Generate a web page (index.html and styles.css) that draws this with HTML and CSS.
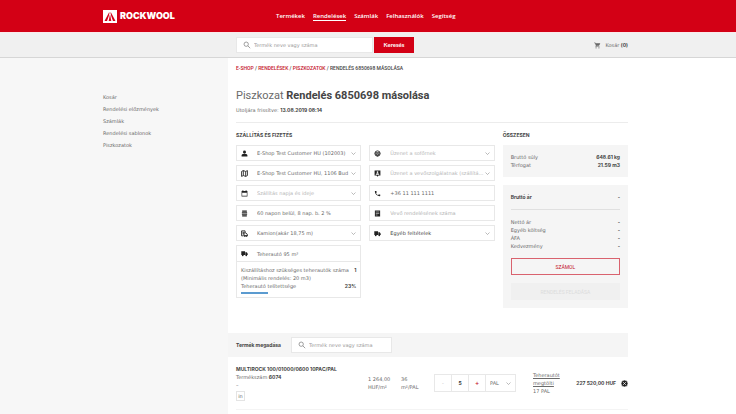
FILE: index.html
```html
<!DOCTYPE html>
<html lang="hu">
<head>
    <meta charset="UTF-8">
    <meta name="viewport" content="width=device-width, initial-scale=1.0">
    <title>Rockwool - Rendelés másolása</title>
    <link rel="stylesheet" href="styles.css">
</head>
<body>
    <header class="top">
        <a href="#" class="logo">
            <svg class="logo-mark" viewBox="0 0 14 13"><rect width="14" height="13" fill="#fff"/><path d="M1.500 11 6 2.500h.6L5.800 6 4 11zM12.500 11 8 2.500h-.6L8.200 6 10 11zM6.800 5h.4L8.300 11H5.700z" fill="#d3001b"/></svg>
            ROCKWOOL
        </a>
        <nav class="main-nav">
            <a href="#">Termékek</a>
            <a href="#" class="active">Rendelések</a>
            <a href="#">Számlák</a>
            <a href="#">Felhasználók</a>
            <a href="#">Segítség</a>
        </nav>
    </header>

    <div class="toolbar">
        <form class="toolbar-search">
            <div class="search-box">
                <svg viewBox="0 0 10 10"><circle cx="4" cy="4" r="2.700"/><path d="M6 6l3 3"/></svg>
                <input type="text" aria-label="Keresés" placeholder="Termék neve vagy száma">
            </div>
            <button type="button" class="btn-search">Keresés</button>
        </form>
        <a href="#" class="cart">
            <svg viewBox="0 0 24 24"><path d="M7 18a2 2 0 1 0 0 4 2 2 0 0 0 0-4zM17 18a2 2 0 1 0 0 4 2 2 0 0 0 0-4zM1 2v2h2l3.600 7.600L5.200 14C4.500 15.400 5.500 17 7 17h12v-2H7.400l1.100-2h7.500c.7 0 1.400-.4 1.700-1L21.500 5 20.500 4H5.200l-.9-2z"/></svg>
            <span>Kosár <b>(0)</b></span>
        </a>
    </div>

    <div class="layout">
        <aside class="sidebar">
            <a href="#">Kosár</a>
            <a href="#">Rendelési előzmények</a>
            <a href="#">Számlák</a>
            <a href="#">Rendelési sablonok</a>
            <a href="#">Piszkozatok</a>
        </aside>

        <main class="content">
            <nav class="breadcrumb">
                <a href="#">E-shop</a> / <a href="#">Rendelések</a> / <a href="#">Piszkozatok</a> / <span>Rendelés 6850698 másolása</span>
            </nav>
            <h1>Piszkozat <b>Rendelés 6850698 másolása</b></h1>
            <p class="updated">Utoljára frissítve: <b>13.08.2019 08:14</b></p>

            <div class="order">
                <section class="shipping">
                    <h2>Szállítás és fizetés</h2>
                    <div class="columns">
                        <div class="fields">
                            <div class="field">
                                <svg class="icon" viewBox="0 0 24 24"><path d="M12 2a5 5 0 0 1 5 5c0 3-2 6-5 6s-5-3-5-6a5 5 0 0 1 5-5zM2 22v-4c0-2 4-4 7-4h6c3 0 7 2 7 4v4z"/></svg>
                                <select aria-label="Vevő"><option>E-Shop Test Customer HU (102003)</option></select>
                                <svg class="chevron" viewBox="0 0 10 10"><path d="M1 3l4 4 4-4"/></svg>
                            </div>
                            <div class="field">
                                <svg class="icon line" viewBox="0 0 24 24"><path d="M2 5l6-3 8 3 6-3v17l-6 3-8-3-6 3zM8 2v17M16 5v17"/></svg>
                                <select aria-label="Cím"><option>E-Shop Test Customer HU, 1106 Bud</option></select>
                                <svg class="chevron" viewBox="0 0 10 10"><path d="M1 3l4 4 4-4"/></svg>
                            </div>
                            <div class="field">
                                <svg class="icon" viewBox="0 0 24 24"><path d="M5 1h3v2h8V1h3v2h3v19H2V3h3zM4 9v11h16V9z" fill-rule="evenodd"/></svg>
                                <select class="empty" aria-label="Szállítás napja"><option>Szállítás napja és ideje</option></select>
                                <svg class="chevron" viewBox="0 0 10 10"><path d="M1 3l4 4 4-4"/></svg>
                            </div>
                            <div class="field">
                                <svg class="icon" viewBox="0 0 24 24"><path d="M4 2h16v4H4zM3 8h18v3H3zM3 13h18v3H3zM4 18h16v4H4z"/></svg>
                                <input type="text" aria-label="Fizetési feltétel" value="60 napon belül, 8 nap. b. 2 %">
                            </div>
                            <div class="field">
                                <svg class="icon line" viewBox="0 0 24 24"><path d="M8 20H2V3h12v6M5 8h6M5 13h5M10 10h7l5 5v5H10z"/><circle cx="13" cy="20" r="2"/><circle cx="19" cy="20" r="2"/></svg>
                                <select aria-label="Jármű"><option>Kamion(akár 18,75 m)</option></select>
                                <svg class="chevron" viewBox="0 0 10 10"><path d="M1 3l4 4 4-4"/></svg>
                            </div>
                            <div class="truck">
                                <div class="truck-head">
                                    <svg class="icon" viewBox="0 0 24 24"><path d="M1 4h13v13H1zM15 8h5l3 5v4h-8z"/><circle cx="6" cy="18" r="3"/><circle cx="18" cy="18" r="3"/></svg>
                                    <span>Teherautó 95 m³</span>
                                </div>
                                <dl class="truck-info">
                                    <div><dt>Kiszállításhoz szükséges teherautók száma<br>(Minimális rendelés: 20 m3)</dt><dd>1</dd></div>
                                    <div><dt>Teherautó telítettsége</dt><dd>23%</dd></div>
                                </dl>
                                <div class="bar"><div class="bar-fill" style="width: 23%"></div></div>
                            </div>
                        </div>

                        <div class="fields">
                            <div class="field">
                                <svg class="icon line" viewBox="0 0 24 24"><circle cx="12" cy="12" r="9"/><path d="M3 11c5-3 13-3 18 0M9 13h6l-1 7h-4zM4 14h5M15 14h5"/></svg>
                                <select class="empty" aria-label="Üzenet a sofőrnek"><option>Üzenet a sofőrnek</option></select>
                                <svg class="chevron" viewBox="0 0 10 10"><path d="M1 3l4 4 4-4"/></svg>
                            </div>
                            <div class="field">
                                <svg class="icon" viewBox="0 0 24 24"><path d="M2 2h20v17h-7l-3 4-3-4H2zM12 4a3 3 0 1 0 0 6 3 3 0 0 0 0-6zM6 16h12c0-3-3-5-6-5s-6 2-6 5z" fill-rule="evenodd"/></svg>
                                <select class="empty" aria-label="Üzenet a vevőszolgálatnak"><option>Üzenet a vevőszolgálatnak (szállítá...</option></select>
                                <svg class="chevron" viewBox="0 0 10 10"><path d="M1 3l4 4 4-4"/></svg>
                            </div>
                            <div class="field">
                                <svg class="icon" viewBox="0 0 24 24"><path d="M7 11c1.400 2.800 3.800 5.100 6.600 6.600l2.200-2.200c.3-.3.700-.4 1-.2 1.100.4 2.300.6 3.600.6.600 0 1 .4 1 1V20c0 .6-.4 1-1 1C11 21 3 13 3 4c0-.6.400-1 1-1h3.500c.6 0 1 .4 1 1 0 1.300.2 2.500.6 3.600.1.300 0 .7-.3 1z"/></svg>
                                <input type="text" aria-label="Telefonszám" value="+36 11 111 1111">
                            </div>
                            <div class="field">
                                <svg class="icon" viewBox="0 0 24 24"><path d="M3 2h18v20H3zM6 6v2h12V6zM6 11v2h12v-2zM6 16v2h6v-2z" fill-rule="evenodd"/></svg>
                                <input type="text" aria-label="Vevő rendelésének száma" placeholder="Vevő rendelésének száma">
                            </div>
                            <div class="field">
                                <svg class="icon" viewBox="0 0 24 24"><path d="M1 4h13v13H1zM15 8h5l3 5v4h-8z"/><circle cx="6" cy="18" r="3"/><circle cx="18" cy="18" r="3"/></svg>
                                <select class="dark" aria-label="Egyéb feltételek"><option>Egyéb feltételek</option></select>
                                <svg class="chevron" viewBox="0 0 10 10"><path d="M1 3l4 4 4-4"/></svg>
                            </div>
                        </div>
                    </div>
                </section>

                <section class="summary">
                    <h2>Összesen</h2>
                    <dl class="panel">
                        <div><dt>Bruttó súly</dt><dd>648.61 kg</dd></div>
                        <div><dt>Térfogat</dt><dd>21.59 m3</dd></div>
                    </dl>
                    <div class="panel">
                        <dl>
                            <div class="gross"><dt>Bruttó ár</dt><dd>-</dd></div>
                            <div><dt>Nettó ár</dt><dd>-</dd></div>
                            <div><dt>Egyéb költség</dt><dd>-</dd></div>
                            <div><dt>ÁFA</dt><dd>-</dd></div>
                            <div><dt>Kedvezmény</dt><dd>-</dd></div>
                        </dl>
                        <button type="button" class="btn-outline">SZÁMOL</button>
                        <button type="button" class="btn-disabled" disabled>RENDELÉS FELADÁSA</button>
                    </div>
                </section>
            </div>

            <div class="add-product">
                <label for="product">Termék megadása</label>
                <div class="search-box">
                    <svg viewBox="0 0 10 10"><circle cx="4" cy="4" r="2.700"/><path d="M6 6l3 3"/></svg>
                    <input type="text" id="product" placeholder="Termék neve vagy száma">
                </div>
            </div>

            <table class="products">
                <tr>
                    <td class="col-name">
                        <b>MULTIROCK 100/01000/0600 10PAC/PAL</b><br>
                        Termékszám <b>6074</b><br>
                        –<br>
                        <span class="tag">in</span>
                    </td>
                    <td class="col-small">1 264,00<br>HUF/m²</td>
                    <td class="col-small">36<br>m²/PAL</td>
                    <td class="col-amount">
                        <div class="amount">
                            <button type="button" class="minus">-</button>
                            <input type="text" aria-label="Mennyiség" value="5">
                            <button type="button" class="plus">+</button>
                            <div class="unit">
                                <select aria-label="Egység"><option>PAL</option></select>
                                <svg class="chevron" viewBox="0 0 10 10"><path d="M1 3l4 4 4-4"/></svg>
                            </div>
                        </div>
                    </td>
                    <td class="col-truck"><a href="#">Teherautót megtölti</a><br>17 PAL</td>
                    <td class="col-total">227 520,00 HUF</td>
                    <td class="col-remove">
                        <button type="button" class="remove" aria-label="Törlés">
                            <svg viewBox="0 0 10 10"><circle cx="5" cy="5" r="5"/><path d="M3 3l4 4M7 3l-4 4"/></svg>
                        </button>
                    </td>
                </tr>
            </table>
        </main>
    </div>
</body>
</html>
```
FILE: styles.css
```css
* {
    box-sizing: border-box;
}

body {
    margin: 0;
    min-height: 100vh;
    display: flex;
    flex-direction: column;
    background-color: #fff;
    color: #6a6a6a;
    font-family: "DejaVu Sans", sans-serif;
    font-size: 5px;
    line-height: 8px;
}

a {
    color: inherit;
    text-decoration: none;
}

h1, h2, p, dl, dd {
    margin: 0;
}

input, select, button {
    margin: 0;
    padding: 0;
    border: none;
    border-radius: 0;
    background: none;
    color: inherit;
    font: inherit;
    appearance: none;
    outline: none;
}

button {
    cursor: pointer;
}

input::placeholder {
    color: #b0b0b0;
    opacity: 1;
}

/* header */
.top {
    display: flex;
    align-items: center;
    height: 32px;
    padding-left: 103px;
    background-color: #d30015;
    color: #fff;
}

.logo {
    display: flex;
    align-items: center;
    gap: 3px;
    width: 173px;
    font-family: Inter, sans-serif;
    font-size: 9px;
    font-weight: 900;
}

.logo-mark {
    width: 14px;
    height: 13px;
}

.main-nav {
    display: flex;
    gap: 8px;
    font-family: "Open Sans", sans-serif;
    font-size: 6px;
    font-weight: 600;
}

.main-nav .active {
    border-bottom: 1px solid #fff;
    margin-bottom: -1px;
}

.toolbar {
    display: flex;
    justify-content: space-between;
    align-items: center;
    height: 26px;
    padding: 0 108px 0 236px;
    background-color: #f0f0f0;
    border-top: 1px solid #fbe9ea;
    border-bottom: 1px solid #d6d6d6;
}

.toolbar-search {
    display: flex;
    gap: 1px;
    width: 178px;
    height: 16px;
}

.search-box {
    display: flex;
    align-items: center;
    gap: 3px;
    flex: 1;
    padding-left: 6px;
    height: 16px;
    background-color: #fff;
    border: 1px solid #e8e8e8;
}

.search-box svg {
    width: 8px;
    height: 8px;
    fill: none;
    stroke: #888;
}

.search-box input {
    flex: 1;
    min-width: 0;
}

.search-box input::placeholder {
    color: #999;
}

.btn-search {
    width: 40px;
    background-color: #d30015;
    color: #fff;
    font-family: Lato, sans-serif;
    font-size: 6px;
    font-weight: bold;
}

.cart {
    display: flex;
    align-items: center;
    gap: 4px;
}

.cart svg {
    width: 7px;
    height: 7px;
    fill: #666;
}

/* page */
.layout {
    display: flex;
    flex: 1;
}

.sidebar {
    display: flex;
    flex-direction: column;
    gap: 4px;
    width: 228px;
    padding: 35px 0 0 103px;
    background-color: #f7f7f7;
}

.content {
    flex: 1;
    min-width: 0;
    margin-right: 108px;
}

.breadcrumb {
    padding: 6px 0 0 8px;
    color: #444;
    font-family: Roboto, sans-serif;
    font-weight: 500;
    text-transform: uppercase;
}

.breadcrumb a {
    color: #c4122a;
}

h1 {
    padding: 16px 0 0 8px;
    font-family: Roboto, sans-serif;
    font-size: 11px;
    font-weight: 400;
    line-height: 16px;
}

.updated {
    margin: 2px 0 0 8px;
    padding-bottom: 8px;
    border-bottom: 1px solid #ececec;
}

b, dd, h2, label, .gross dt, .col-total {
    color: #444;
    font-family: Inter, sans-serif;
    font-weight: bold;
}

h1 b {
    font-family: inherit;
}

h2 {
    margin-bottom: 6px;
    font-size: 5px;
    text-transform: uppercase;
}

.order {
    display: grid;
    grid-template-columns: repeat(3, minmax(0, 1fr));
    gap: 8px;
    padding: 8px 0 0 8px;
}

.shipping {
    grid-column: span 2;
}

.columns {
    display: grid;
    grid-template-columns: repeat(2, minmax(0, 1fr));
    gap: 8px;
}

.fields {
    display: flex;
    flex-direction: column;
    gap: 4px;
}

.field {
    display: flex;
    align-items: center;
    height: 16px;
    padding: 0 4px;
    border: 1px solid #e8e8e8;
}

.icon {
    flex: none;
    width: 7px;
    height: 7px;
    margin-right: 9px;
    fill: #222;
}

.icon.line {
    fill: none;
    stroke: #222;
    stroke-width: 3;
}

.field select, .field input {
    flex: 1;
    min-width: 0;
}

.field .empty {
    color: #b5b5b5;
}

.field .dark {
    color: #444;
}

.chevron {
    flex: none;
    width: 5px;
    height: 5px;
    fill: none;
    stroke: #777;
}

.truck {
    padding-bottom: 3px;
    border: 1px solid #e8e8e8;
}

.truck-head {
    display: flex;
    align-items: center;
    height: 16px;
    padding: 0 4px;
    border-bottom: 1px solid #e8e8e8;
}

.truck-info {
    padding: 4px 4px 2px;
}

.truck-info dt {
    white-space: nowrap;
}

dl > div {
    display: flex;
    justify-content: space-between;
}

.bar {
    padding: 0 4px;
}

.bar-fill {
    height: 2px;
    background-color: #5b9bd0;
}

/* summary */
.panel {
    margin-bottom: 8px;
    padding: 8px;
    background-color: #f5f5f5;
}

.gross {
    margin-bottom: 8px;
    padding-bottom: 8px;
    border-bottom: 1px solid #e0e0e0;
}

.panel button {
    display: block;
    width: 100%;
    height: 17px;
    margin-top: 8px;
    font-family: Roboto, sans-serif;
}

.btn-outline {
    border: 1px solid #d9626e;
    color: #c4122a;
}

.btn-disabled {
    background-color: #f0f0f0;
    color: #dcdcdc;
}

/* products */
.add-product {
    display: flex;
    align-items: center;
    gap: 10px;
    height: 24px;
    margin-top: 17px;
    padding-left: 8px;
    background-color: #f5f5f5;
}

.add-product .search-box {
    flex: none;
    width: 101px;
}

.products {
    width: calc(100% - 8px);
    margin-left: 8px;
    border-collapse: collapse;
    table-layout: fixed;
    border-bottom: 1px solid #f4f4f4;
}

.products td {
    padding: 8px 0;
}

.col-name {
    width: 132px;
}

.col-small {
    width: 33px;
}

.col-amount {
    width: 99px;
}

.col-truck {
    width: 36px;
}

.col-truck a {
    text-decoration: underline;
}

.col-total {
    text-align: right;
    white-space: nowrap;
}

.col-remove {
    width: 12px;
}

.tag {
    display: inline-block;
    width: 9px;
    margin-top: 2px;
    border: 1px solid #e4e4e4;
    text-align: center;
}

.amount {
    display: flex;
    width: 82px;
    height: 18px;
    border: 1px solid #e8e8e8;
}

.amount > * {
    width: 17px;
    border-right: 1px solid #e8e8e8;
    text-align: center;
}

.amount .minus {
    color: #bbb;
}

.amount input {
    color: #333;
    font-family: Inter, sans-serif;
    font-weight: bold;
}

.amount .plus {
    color: #c4122a;
    font-weight: bold;
}

.amount .unit {
    display: flex;
    align-items: center;
    flex: 1;
    padding: 0 4px;
    border-right: none;
}

.unit select {
    flex: 1;
    min-width: 0;
}

.remove {
    display: block;
    margin-left: auto;
    width: 7px;
    height: 7px;
}

.remove svg {
    display: block;
    fill: #222;
    stroke: #fff;
}
```
